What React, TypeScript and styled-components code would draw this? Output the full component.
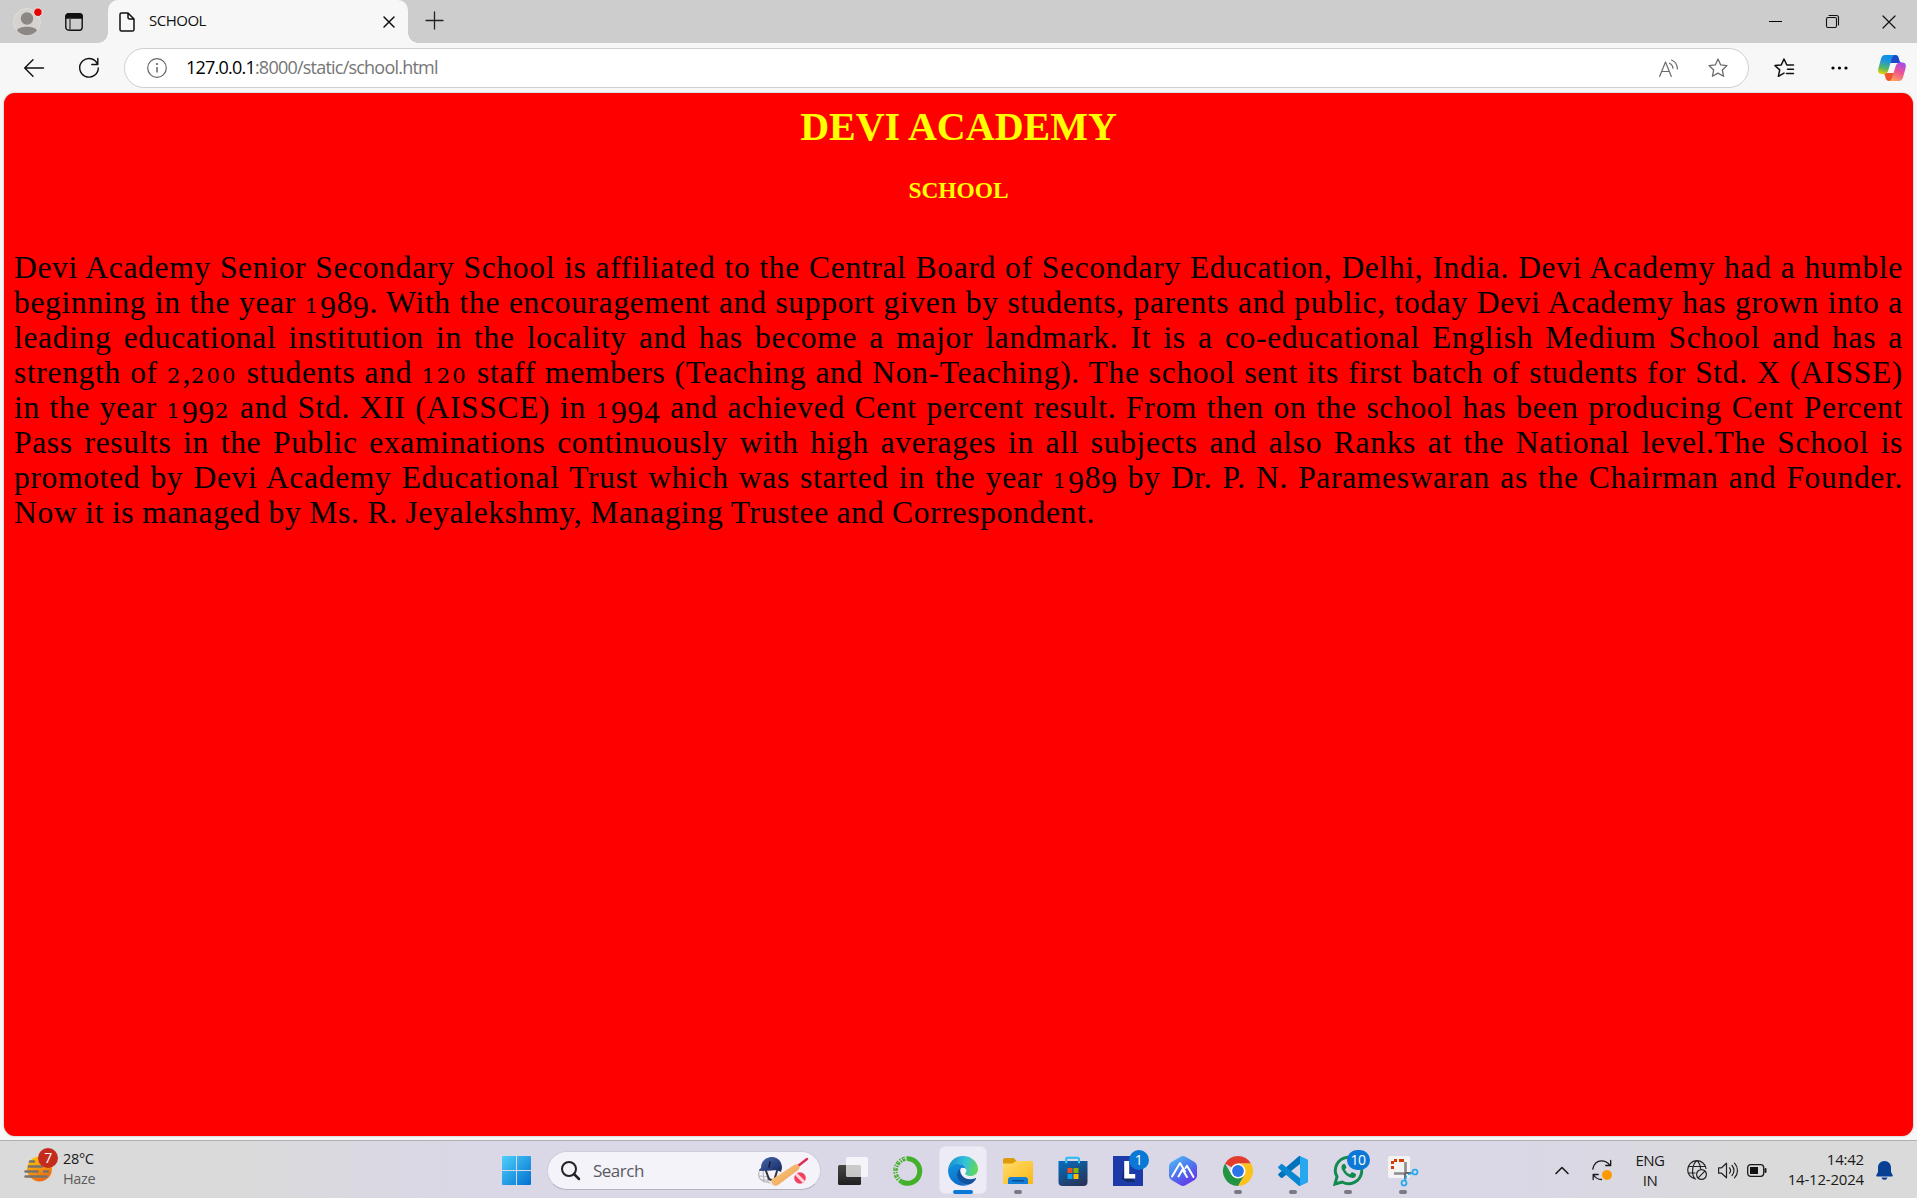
import React from "react";
import styled, { createGlobalStyle } from "styled-components";

const ui = '"Open Sans", "Noto Sans", sans-serif';

const Global = createGlobalStyle`
  * { box-sizing: border-box; }
  body { margin: 0; background: #f7f7f7; font-family: ${ui}; overflow: hidden; }
  svg { display: block; overflow: visible; flex: none; }
`;

const Screen = styled.div`
  width: 1917px; height: 1198px; display: flex; flex-direction: column; background: #f7f7f7;
`;

/* Tab strip */
const TabStrip = styled.div`
  height: 43px; flex: none; display: flex; background: #cdcdcd;
`;
const StripTools = styled.div`
  width: 108px; display: flex; align-items: center; padding-left: 13px; gap: 24px;
`;
const Tab = styled.div`
  width: 300px; height: 43px; display: flex; align-items: center; padding: 0 14px 0 11px;
  background: #f7f7f7; border-radius: 10px 10px 0 0; position: relative;
  &::before, &::after {
    content: ""; position: absolute; bottom: 0; width: 10px; height: 10px;
  }
  &::before { left: -10px; background: radial-gradient(circle at 0 0, transparent 9.5px, #f7f7f7 10px); }
  &::after { right: -10px; background: radial-gradient(circle at 100% 0, transparent 9.5px, #f7f7f7 10px); }
`;
const TabTitle = styled.span`
  flex: 1; margin-left: 14px; font-size: 15px; line-height: 20px; letter-spacing: -0.5px; color: #111;
  padding-bottom: 3px;
`;
const NewTab = styled.div`
  display: flex; align-items: center; margin-left: 18px; padding-bottom: 2px;
`;
const WindowButtons = styled.div`
  margin-left: auto; display: flex;
`;
const WinButton = styled.div<{ $w?: number }>`
  width: ${(p) => p.$w ?? 57}px; display: flex; align-items: center; justify-content: center;
`;

/* Address row */
const AddressRow = styled.div`
  height: 50px; flex: none; display: flex; align-items: center; background: #f7f7f7; padding: 0 0 1px 24px;
`;
const NavIcon = styled.div<{ $gap?: number }>`
  display: flex; margin-right: ${(p) => p.$gap ?? 0}px;
`;
const AddressBar = styled.div`
  width: 1625px; height: 40px; margin-top: 1px; border: 1px solid #cfcfcf; border-radius: 20px; background: #fff;
  display: flex; align-items: center; padding: 0 20px 0 22px;
`;
const Url = styled.span`
  flex: 1; margin-left: 19px; padding-bottom: 2px; font-size: 18px; line-height: 26px; letter-spacing: -0.78px; color: #767676;
  b { font-weight: 400; color: #000; }
`;

/* Web page */
const Page = styled.main`
  flex: none; height: 1043px; margin: 0 4px 4px; border-radius: 11px; background: #f00;
  padding: 11px 10px 0 10px; box-shadow: 0 0 2px rgba(0, 0, 0, 0.35);
  font-family: "Liberation Serif", serif; text-align: center;
`;
const Title = styled.h1`
  margin: 0; font-size: 40px; line-height: 46px; color: #ff0;
`;
const Subtitle = styled.h3`
  margin: 27px 0 0; font-size: 23.4px; line-height: 27px; color: #ff0;
`;
const Story = styled.div`
  margin-top: 46px; color: #000; font-size: 31.6px; line-height: 35px; text-align: left;
`;
const Line = styled.p<{ $width?: number }>`
  margin: 0; white-space: nowrap; height: 35px; letter-spacing: 0.64px; word-spacing: -1.4px;
  width: ${(p) => (p.$width ? p.$width + "px" : "100%")};
  text-align: justify; text-align-last: justify;
`;
const SmallFigure = styled.span`
  font-family: "DejaVu Serif", serif; font-size: 0.67em; line-height: 1px; letter-spacing: 2px;
`;
const LowFigure = styled.span`
  position: relative; top: 5px; line-height: 1px;
`;

const story: { text: string; width?: number }[] = [
  { text: "Devi Academy Senior Secondary School is affiliated to the Central Board of Secondary Education, Delhi, India. Devi Academy had a humble" },
  { text: "beginning in the year 1989. With the encouragement and support given by students, parents and public, today Devi Academy has grown into a" },
  { text: "leading educational institution in the locality and has become a major landmark. It is a co-educational English Medium School and has a" },
  { text: "strength of 2,200 students and 120 staff members (Teaching and Non-Teaching). The school sent its first batch of students for Std. X (AISSE)" },
  { text: "in the year 1992 and Std. XII (AISSCE) in 1994 and achieved Cent percent result. From then on the school has been producing Cent Percent" },
  { text: "Pass results in the Public examinations continuously with high averages in all subjects and also Ranks at the National level.The School is" },
  { text: "promoted by Devi Academy Educational Trust which was started in the year 1989 by Dr. P. N. Parameswaran as the Chairman and Founder." },
  { text: "Now it is managed by Ms. R. Jeyalekshmy, Managing Trustee and Correspondent.", width: 1081 },
];

/* Old-style numerals: 0, 1, 2 sit at x-height, 4 and 9 descend. */
function oldStyle(text: string) {
  return text.split(/([012]+|[49]+)/).map((part, i) => {
    if (/^[012]+$/.test(part)) return <SmallFigure key={i}>{part}</SmallFigure>;
    if (/^[49]+$/.test(part)) return <LowFigure key={i}>{part}</LowFigure>;
    return part;
  });
}

/* Taskbar */
const Taskbar = styled.footer`
  height: 58px; flex: none; display: flex; border-top: 1px solid #b0b0b4;
  background: linear-gradient(90deg, #dadada 0, #dadada 230px, #dad7e7 480px, #dad7e7 1500px, #dadada 1760px, #dadada 100%);
`;
const Weather = styled.div`
  width: 489px; display: flex; align-items: center; padding-left: 24px; gap: 9px;
`;
const TwoLines = styled.div<{ $align?: string; $ls?: number; $size?: number }>`
  display: flex; flex-direction: column; text-align: ${(p) => p.$align ?? "left"};
  font-size: ${(p) => p.$size ?? 14.5}px; line-height: 20px; letter-spacing: ${(p) => p.$ls ?? -0.5}px; color: #1a1a1a;
  white-space: nowrap; padding-bottom: 1px;
`;
const Muted = styled.span`color: #5c5c5c;`;
const IconBox = styled.div`position: relative; display: flex;`;
const Badge = styled.span<{ $bg: string; $x: number; $y: number; $w?: number }>`
  position: absolute; left: ${(p) => p.$x}px; top: ${(p) => p.$y}px;
  width: ${(p) => p.$w ?? 20}px; height: 20px; border-radius: 10px;
  background: ${(p) => p.$bg}; color: #fff; font-size: 14px; line-height: 19px; text-align: center; letter-spacing: -0.5px;
`;
const Cell = styled.div<{ $active?: boolean }>`
  width: 55px; height: 57px; display: flex; flex-direction: column; align-items: center; justify-content: center;
  padding-top: 2px; position: relative;
  ${(p) => p.$active && `&::before { content: ""; position: absolute; inset: 5px 3.5px 4px; background: #edebf5; border: 1px solid #e4e2ec; border-radius: 6px; }`}
`;
const Marker = styled.i<{ $active?: boolean }>`
  position: absolute; top: 49px; width: ${(p) => (p.$active ? 20 : 8)}px; height: 4px; border-radius: 2px;
  background: ${(p) => (p.$active ? "#0a78d6" : "#7b7a83")};
`;
const SearchBox = styled.div`
  width: 274px; height: 39px; margin: 10px 4px 0 3px; border-radius: 20px; background: #f4f3f9;
  border: 1px solid #cfcdda; border-bottom-color: #b4b2bf; display: flex; align-items: center; padding: 0 12px 0 13px;
`;
const SearchText = styled.span`
  flex: 1; margin-left: 13px; font-size: 17px; line-height: 24px; letter-spacing: -0.5px; color: #5a5961;
`;
const Tray = styled.div`
  margin-left: auto; display: grid; grid-template-columns: 44px 36px 60px 34px 28px 30px 92px 40px;
  align-items: center; justify-items: center; padding: 1px 13px 0 0;
`;
const ClockCell = styled.div`justify-self: end; padding-bottom: 2px;`;

const Ico = (p: React.SVGProps<SVGSVGElement>) => (
  <svg fill="none" strokeLinecap="round" strokeLinejoin="round" {...p} />
);

const STAR = "M10 1l2.7 5.9 6.3.7-4.7 4.3 1.3 6.4L10 15.1l-5.6 3.2 1.3-6.4L1 7.6l6.3-.7z";

const FavWrap = styled.div`margin-left: 25px;`;
const FavIcon = () => (
  <FavWrap>
    <Ico width="21" height="20" viewBox="0 0 21 20" stroke="#111" strokeWidth="1.5">
      <path d="M12.8 7L10 1 7.3 6.9 1 7.6l4.700 4.3-1.3 6.4L10 15.1M12.8 7h6.7M13.5 11.2h6M12.5 15.5h7" />
    </Ico>
  </FavWrap>
);

const Copilot = () => (
  <Ico width="28" height="26" viewBox="0 0 28 26">
    <defs>
      <linearGradient id="cpA" x1="0.4" y1="0" x2=".2" y2="1">
        <stop offset="0" stopColor="#0c8fe8" /><stop offset=".3" stopColor="#1f96dc" /><stop offset=".7" stopColor="#5cb85e" /><stop offset="1" stopColor="#f5d000" />
      </linearGradient>
      <linearGradient id="cpB" x1="0.7" y1="0" x2=".3" y2="1">
        <stop offset="0" stopColor="#a84de8" /><stop offset=".5" stopColor="#ee5590" /><stop offset="1" stopColor="#ffa35c" />
      </linearGradient>
    </defs>
    <path d="M13 0h4.500c2.500 0 3 2 3.700 4.800.5 2 1.300 3.200 3 3.200H12z" fill="#1c48cc" />
    <path d="M16 26h-5c-3 0-3.200-2.500-4-5.200C6.500 19 5.600 18 4 18h13z" fill="#f2552c" />
    <path d="M7 0h10.500c-2.300 0-3.200 2-3.900 4.300L10.500 14.500C9.700 17.300 8.600 19 6 19H3.500C0 19-.3 16 .5 13L3 3.800C3.700 1.200 5 0 7 0z" fill="url(#cpA)" />
    <path d="M21 26H10.500c2.300 0 3.200-2 3.900-4.300l3.100-10.200c.8-2.300 1.900-4 4.500-4h2.500c3.500 0 3.800 3 3 6L25 22.200c-.7 2.600-2 3.800-4 3.800z" fill="url(#cpB)" />
  </Ico>
);

function Browser() {
  return (
    <>
      <TabStrip>
        <StripTools>
          <Ico width="28" height="28" viewBox="0 0 28 28">
            <circle cx="14" cy="14" r="13.5" fill="#d6d2ce" stroke="#e0deda" />
            <circle cx="14" cy="10.5" r="6.2" fill="#8b8784" />
            <path d="M4 22.5C6 17.5 22 17.5 24 22.5A13 13 0 0 1 4 22.5Z" fill="#8b8784" />
            <circle cx="25" cy="4.2" r="4.3" fill="#e60000" stroke="#f3e5e5" />
          </Ico>
          <Ico width="18" height="18" viewBox="0 0 18 18" stroke="#111" strokeWidth="1.4">
            <rect x="0.8" y="0.8" width="16.4" height="16.4" rx="3" />
            <path d="M1 5V3a2 2 0 0 1 2-2h12a2 2 0 0 1 2 2v2z" fill="#111" />
            <path d="M5 5v12" stroke="#444" />
          </Ico>
        </StripTools>
        <Tab>
          <Ico width="16" height="20" viewBox="0 0 16 20" stroke="#111" strokeWidth="1.5">
            <path d="M2.5 1H9l6 6v10.500a1.600 1.600 0 0 1-1.600 1.600H2.500A1.600 1.600 0 0 1 1 17.500v-15A1.500 1.500 0 0 1 2.500 1zM9 1v4.500A1.500 1.500 0 0 0 10.500 7H15" />
          </Ico>
          <TabTitle>SCHOOL</TabTitle>
          <Ico width="10" height="10" viewBox="0 0 10 10" stroke="#111" strokeWidth="1.5"><path d="M0 0l10 10M10 0L0 10" /></Ico>
        </Tab>
        <NewTab>
          <Ico width="17" height="17" viewBox="0 0 17 17" stroke="#222" strokeWidth="1.3"><path d="M8.5 0v17M0 8.5h17" /></Ico>
        </NewTab>
        <WindowButtons>
          <WinButton><svg width="13" height="1"><rect width="13" height="1" fill="#000" /></svg></WinButton>
          <WinButton>
            <Ico width="13" height="13" viewBox="0 0 13 13" stroke="#111" strokeWidth="1.1">
              <rect x="0.5" y="2.5" width="10" height="10" rx="1.5" /><path d="M3 .5h7.500a2 2 0 0 1 2 2V10" />
            </Ico>
          </WinButton>
          <WinButton $w={56}>
            <Ico width="12" height="12" viewBox="0 0 12 12" stroke="#111" strokeWidth="1.2"><path d="M0 0l12 12M12 0L0 12" /></Ico>
          </WinButton>
        </WindowButtons>
      </TabStrip>
      <AddressRow>
        <NavIcon $gap={35}>
          <Ico width="20" height="18" viewBox="0 0 20 18" stroke="#111" strokeWidth="1.4"><path d="M19.5 9H.7M9 .7L.7 9 9 17.300" /></Ico>
        </NavIcon>
        <NavIcon $gap={25}>
          <Ico width="20" height="20" viewBox="0 0 20 20" stroke="#111" strokeWidth="1.4"><path d="M18.700 6.500A9.300 9.300 0 1 0 19.300 10M18.800 .5v6h-6" /></Ico>
        </NavIcon>
        <AddressBar>
          <Ico width="20" height="20" viewBox="0 0 20 20" stroke="#666" strokeWidth="1.2">
            <circle cx="10" cy="10" r="9.3" /><path d="M10 9v5.500" strokeLinecap="butt" strokeWidth="1.5" /><circle cx="10" cy="6" r=".5" fill="#666" />
          </Ico>
          <Url><b>127.0.0.1</b>:8000/static/school.html</Url>
          <NavIcon $gap={30}>
            <Ico width="19" height="18" viewBox="0 0 19 18" stroke="#6b6b6b" strokeWidth="1.2">
              <path d="M.6 17.500L6.500 3l5.800 14.500M2.700 12.500h7.600M10.500 4.200c2.300 1 3.300 2.700 3.500 5M12.500 1c3.700 1.400 5.700 4.500 5.900 9" />
            </Ico>
          </NavIcon>
          <Ico width="20" height="20" viewBox="0 0 20 20" stroke="#6b6b6b" strokeWidth="1.3"><path d={STAR} /></Ico>
        </AddressBar>
        <NavIcon $gap={36}>
          <FavIcon />
        </NavIcon>
        <NavIcon $gap={30}>
          <svg width="17" height="4"><circle cx="2" cy="2" r="1.6" /><circle cx="8.5" cy="2" r="1.6" /><circle cx="15" cy="2" r="1.6" /></svg>
        </NavIcon>
        <Copilot />
      </AddressRow>
    </>
  );
}

const I = (p: { children: React.ReactNode }) => <IconSvg width="30" height="30" viewBox="0 0 30 30" fill="none">{p.children}</IconSvg>;
const IconSvg = styled.svg`position: relative;`;

const icons: { el: React.ReactNode; marker?: boolean; active?: boolean; badge?: string }[] = [
  { el: <I>
      <defs><linearGradient id="tvB" x1="0" y1="0" x2="0" y2="1"><stop stopColor="#484645" /><stop offset="1" stopColor="#202020" /></linearGradient></defs>
      <rect y="9" width="23" height="20" rx="1.5" fill="url(#tvB)" /><rect x="8" y="1" width="22" height="20" rx="1.5" fill="#fff" fillOpacity=".72" />
    </I> },
  { el: <I>
      <path d="M15 2.700A12.300 12.300 0 1 1 9 26" stroke="#43b02a" strokeWidth="5" />
      <path d="M15 2.500A12.500 12.500 0 0 0 9 26" stroke="#43b02a" strokeWidth="4.5" strokeDasharray="1.5 1.3 3 1" />
      <path d="M12 2A13 13 0 0 0 6 24" stroke="#dad7e7" strokeWidth="1" strokeDasharray="2 1.5" />
    </I> },
  { active: true, el: <I>
      <defs>
        <linearGradient id="edA" x1="0" y1=".3" x2="1" y2=".45"><stop stopColor="#168dcc" /><stop offset=".55" stopColor="#32c2dd" /><stop offset="1" stopColor="#64d854" /></linearGradient>
        <linearGradient id="edB" x1="0" y1="0" x2=".5" y2="1"><stop stopColor="#1496dd" /><stop offset="1" stopColor="#086bcc" /></linearGradient>
      </defs>
      <path d="M0 14.500C.5 6 7 0 15 0c9 0 15 6.500 15 13 0 4.500-3.500 7-7.500 7-3.500 0-5.500-1.200-5.500-2.300 0-.8 1.300-1.400 1.300-3.500 0-3-2.800-5.700-7-5.700C5.500 8.500 1 11 0 14.500z" fill="url(#edA)" />
      <path d="M0 14.500C1 10.500 5 8 10 8c5 0 8.300 3 8.300 6.200-1-2-2.500-2.700-4-2.400-3 .7-4.300 4-4 7.700.4 5.200 4.700 9.500 9.700 9.600C11 32 0 25.500 0 14.500z" fill="url(#edB)" />
      <path d="M12.500 12.500c-3 2-4 6-2.500 9.500 2 5 7 7.500 11 6.600 3-.8 5.500-3 7-5.600.4-.7-.2-1.100-.8-.8-5 2.300-11 .8-13.500-3.200-1.400-2.200-1.700-4.600-1.200-6.500z" fill="#11539f" />
      <path d="M12.800 14.500c0-1.700 1.200-2.500 2.500-2.500 1.700 0 3 1.200 3 2.600 0 1.700-1.300 2.300-1.300 3.200 0 1 1.200 1.900 3 2.200-4.500.8-7.200-2-7.200-5.500z" fill="#f4f5fb" />
    </I> },
  { marker: true, el: <I>
      <defs><linearGradient id="foA" x1="0" y1="0" x2="1" y2="1"><stop stopColor="#ffdc6e" /><stop offset="1" stopColor="#fcb813" /></linearGradient></defs>
      <path d="M0 4a2 2 0 0 1 2-2h7.500c1 0 1.500.4 2.200 1l2 2-2 3H0z" fill="#dd9b08" />
      <path d="M0 7.500h9c2 0 2.500-2.500 4.500-2.500H28.500A1.500 1.500 0 0 1 30 6.500V28H0z" fill="url(#foA)" />
      <path d="M5 28v-4a3 3 0 0 1 3-3h14a3 3 0 0 1 3 3v4z" fill="#1380d8" /><rect x="9" y="24" width="12" height="1.5" rx=".7" fill="#064e92" />
    </I> },
  { el: <I>
      <defs><linearGradient id="stA" x1="0" y1="0" x2=".6" y2="1"><stop stopColor="#066fc0" /><stop offset="1" stopColor="#25365e" /></linearGradient></defs>
      <path d="M8.200 7V3A1.200 1.200 0 0 1 9.400 1.800h10.400A1.200 1.200 0 0 1 21 3v4" stroke="#2bb7ef" strokeWidth="2" />
      <path d="M.5 5h29v21a4 4 0 0 1-4 4h-21a4 4 0 0 1-4-4z" fill="url(#stA)" />
      <path d="M8.200 7.200V5M21 7.200V5" stroke="#43c9f7" strokeWidth="2" />
      <path d="M9.500 12h5v5h-5z" fill="#f35022" /><path d="M15.500 12h5v5h-5z" fill="#80bb03" /><path d="M9.500 18h5v5h-5z" fill="#03a5f0" /><path d="M15.500 18h5v5h-5z" fill="#ffba08" />
    </I> },
  { badge: "1", el: <I>
      <rect width="30" height="30" fill="#1d3aab" /><path d="M11 7l-2 16 5 3h8z" fill="#142a68" /><path d="M11.200 5h5v13h6v4.500h-11z" fill="#fff" />
    </I> },
  { el: <I>
      <defs><linearGradient id="moA" x1="0.2" y1="0" x2=".8" y2="1"><stop stopColor="#4fb6f5" /><stop offset=".5" stopColor="#4d72ec" /><stop offset="1" stopColor="#6a2ee6" /></linearGradient></defs>
      <path d="M12.500 .8a5 5 0 0 1 5 0l9 5.200A5 5 0 0 1 29 10v10a5 5 0 0 1-2.500 4l-9 5.200a5 5 0 0 1-5 0L3.500 24A5 5 0 0 1 1 20V10a5 5 0 0 1 2.500-4z" fill="url(#moA)" />
      <path d="M4 20.500L12 7l5 8.500M10.500 20.500l4-7M17.500 12l1.500-2.300L25.500 21M14.500 13.500L19 21" stroke="#fff" strokeWidth="2" strokeLinecap="round" strokeLinejoin="round" />
    </I> },
  { marker: true, el: <I>
      <path d="M15 15L2 7.500A15 15 0 0 1 28 7.500H15z" fill="#e33b2e" />
      <path d="M15 7.500h13A15 15 0 0 1 15 30l6.500-11.200z" fill="#fcc21b" />
      <path d="M15 30A15 15 0 0 1 2 7.500l6.500 11.300L15 22l6.500-3.200z" fill="#229342" />
      <circle cx="15" cy="15" r="7.5" fill="#fff" /><circle cx="15" cy="15" r="5.9" fill="#2a73e8" />
    </I> },
  { marker: true, el: <I>
      <path d="M22 0l7 3.300c.6.300 1 .8 1 1.500v20.400c0 .7-.4 1.200-1 1.500L22 30z" fill="#27a7f0" />
      <path d="M22 0v8L4.500 21.700c-.5.400-1.100.4-1.600 0L.5 19.500c-.5-.5-.5-1.200 0-1.700L20.500 .5c.4-.4 1-.5 1.500-.5z" fill="#0272bc" />
      <path d="M22 30v-8L4.500 8.300c-.5-.4-1.100-.4-1.600 0L.5 10.500c-.5.5-.5 1.200 0 1.700l20 17.300c.4.400 1 .5 1.500.5z" fill="#0a86d1" />
    </I> },
  { marker: true, badge: "10", el: <I>
      <path d="M2 28l2-7.200A13.200 13.200 0 1 1 9.200 26z" stroke="#138a50" strokeWidth="3" />
      <path d="M10 8c-2 1.500-2 4-.5 6.500 2.500 4.500 6 7 10 7.500 2 .2 4-1.500 3.500-4l-4-2-2 2.300c-2.500-1-4-2.500-5-4.800l1.500-2L12 8z" fill="#138a50" />
    </I> },
  { marker: true, el: <I>
      <rect width="22" height="22" rx="2" fill="#f3f3f3" />
      <path d="M14 4.500H4.500V15" stroke="#d83b01" strokeWidth="3" strokeDasharray="3 2" /><path d="M14.500 3v3" stroke="#d83b01" strokeWidth="3" />
      <path d="M17.500 6v12M6 17.500h12" stroke="#8c8c8c" strokeWidth="2.6" /><path d="M17 17h6M17 17v6" stroke="#666" strokeWidth="2" />
      <circle cx="27" cy="16" r="2.5" stroke="#25a7ea" strokeWidth="1.7" /><circle cx="16" cy="27" r="2.5" stroke="#25a7ea" strokeWidth="1.7" />
      <path d="M24.500 17L20 18.500M17 24.500l1.500-5" stroke="#25a7ea" strokeWidth="1.7" />
    </I> },
];

const Cricket = () => (
  <Ico width="50" height="30" viewBox="0 0 50 30">
    <defs>
      <linearGradient id="bat" x1="0" y1="0" x2="1" y2="1"><stop stopColor="#ffd08c" /><stop offset="1" stopColor="#e8984a" /></linearGradient>
      <linearGradient id="helm" x1="0" y1="0" x2="1" y2="1"><stop stopColor="#4a6ab0" /><stop offset="1" stopColor="#14275e" /></linearGradient>
    </defs>
    <path d="M1 16c-1 4 0 7 4 9l7 2M2 20l9 1M4 24l8 0M5 15l1 11M9 16l1 10" stroke="#b5b8bd" strokeWidth="1.2" />
    <path d="M8 15l3 8 5 2 3-10" stroke="#30333c" strokeWidth="2" />
    <path d="M3 12C3 5 8 1 14 1c6.500 0 10 5 10 11l-1 4c-3-2-6-2-9-1.500L1 15c0-1 .5-2 2-3z" fill="url(#helm)" />
    <path d="M12 6l-1 5" stroke="#101c44" strokeWidth="1.5" />
    <path d="M40 10l9-7" stroke="#dc2f55" strokeWidth="2.5" />
    <path d="M13 24L36 9c2-1 4-1 5 1s0 3-1.500 4.500L20 29c-2 1-4 1-6-1z" fill="url(#bat)" />
    <circle cx="42" cy="22" r="5.8" fill="#f2425f" /><path d="M38.500 18.500l7 7" stroke="#ffd4dd" strokeWidth="3" />
  </Ico>
);

const StartIcon = () => (
  <svg width="29" height="29" viewBox="0 0 29 29">
    <defs><linearGradient id="win" gradientUnits="userSpaceOnUse" x1="0" y1="0" x2="29" y2="29"><stop stopColor="#4fd0fb" /><stop offset="1" stopColor="#0070d0" /></linearGradient></defs>
    <path fill="url(#win)" d="M1 0h13v14H0V1a1 1 0 0 1 1-1zM15 0h13a1 1 0 0 1 1 1v13H15zM0 15h14v14H1a1 1 0 0 1-1-1zM15 15h14v13a1 1 0 0 1-1 1H15z" />
  </svg>
);

export default function App() {
  return (
    <Screen>
      <Global />
      <Browser />
      <Page>
        <Title>DEVI ACADEMY</Title>
        <Subtitle>SCHOOL</Subtitle>
        <Story>
          {story.map((l) => (
            <Line key={l.text} $width={l.width}>{oldStyle(l.text)}</Line>
          ))}
        </Story>
      </Page>
      <Taskbar>
        <Weather>
          <IconBox>
            <Ico width="30" height="30" viewBox="0 0 30 30">
              <defs><linearGradient id="sun" x1="0" y1="0" x2=".5" y2="1"><stop stopColor="#ffcf0a" /><stop offset="1" stopColor="#ee6a10" /></linearGradient></defs>
              <circle cx="15.5" cy="14" r="12.5" fill="url(#sun)" />
              <path d="M6 6.500h4M5 11.500h13M1.500 16.500h12M20 16.500h4M1.500 21.500h21" stroke="#77736c" strokeWidth="2.6" />
            </Ico>
            <Badge $bg="#c42b1c" $x={14} $y={-7}>7</Badge>
          </IconBox>
          <TwoLines $ls={-0.35}><span>28°C</span><Muted>Haze</Muted></TwoLines>
        </Weather>
        <Cell><StartIcon /></Cell>
        <SearchBox>
          <Ico width="19" height="19" viewBox="0 0 19 19" stroke="#222" strokeWidth="2"><circle cx="8" cy="8" r="7" /><path d="M13 13l5 5" strokeWidth="2.5" /></Ico>
          <SearchText>Search</SearchText>
          <Cricket />
        </SearchBox>
        {icons.map((ic, i) => (
          <Cell key={i} $active={ic.active}>
            <IconBox>{ic.el}{ic.badge && <Badge $bg="#0a78d4" $x={ic.badge === "1" ? 16 : 14} $y={-6} $w={ic.badge === "1" ? 20 : 23}>{ic.badge}</Badge>}</IconBox>
            {(ic.marker || ic.active) && <Marker $active={ic.active} />}
          </Cell>
        ))}
        <Tray>
          <Ico width="12" height="7" viewBox="0 0 12 7" stroke="#1a1a1a" strokeWidth="1.6"><path d="M0 6.500L6 .5l6 6" /></Ico>
          <Ico width="20" height="20" viewBox="0 0 20 20" stroke="#1a1a1a" strokeWidth="1.3">
            <path d="M.8 9C2 3 5.500 .8 9.500 .8c4 0 6.500 1.700 8.700 4.500M18.700 .5v5h-5M1.200 19.500v-5h5M1.500 15c2 3 4.500 4.500 8 4.500" />
            <circle cx="15" cy="15" r="5" fill="#f90" stroke="none" />
          </Ico>
          <TwoLines $align="center" $size={15}><span>ENG</span><span>IN</span></TwoLines>
          <Ico width="20" height="20" viewBox="0 0 20 20" stroke="#222" strokeWidth="1.2">
            <path d="M8.500 19A9.200 9.200 0 1 1 19 8.500M9.800 .6C4.500 5 4.500 15 8 19M9.800 .6c2.500 2.200 3.700 5 3.800 8M1.500 6.500h16.500M1.300 13H8" />
            <circle cx="14.5" cy="14.5" r="4.9" /><path d="M11.200 17.800l6.600-6.600" />
          </Ico>
          <Ico width="20" height="17" viewBox="0 0 20 17" stroke="#222" strokeWidth="1.2">
            <path d="M.6 5.800h3L8.500 1.200v14.600l-4.900-4.600h-3zM11.500 5.800c1.300 1.600 1.300 3.800 0 5.400M14 3.500c2.600 2.900 2.600 7.100 0 10M16.500 1.200c4 4.200 4 10.400 0 14.600" />
          </Ico>
          <Ico width="20" height="13" viewBox="0 0 20 13" stroke="#1a1a1a" strokeWidth="1.3">
            <rect x=".7" y=".7" width="16" height="11.6" rx="3" /><rect x="3" y="3" width="8" height="7" fill="#111" stroke="none" /><path d="M18.500 5v3" strokeWidth="2" />
          </Ico>
          <ClockCell><TwoLines $align="right" $size={15} $ls={-0.2}><span>14:42</span><span>14-12-2024</span></TwoLines></ClockCell>
          <Ico width="17" height="19" viewBox="0 0 17 19">
            <path fill="#063f94" d="M8.500 0c4 0 6.500 3 6.500 6.500V11l1.700 3.300c.3.600 0 1.200-.7 1.200H1c-.7 0-1-.6-.7-1.200L2 11V6.500C2 3 4.500 0 8.500 0zM5.500 16.500h6c-.5 1.500-1.500 2.300-3 2.300s-2.500-.8-3-2.300z" />
          </Ico>
        </Tray>
      </Taskbar>
    </Screen>
  );
}
